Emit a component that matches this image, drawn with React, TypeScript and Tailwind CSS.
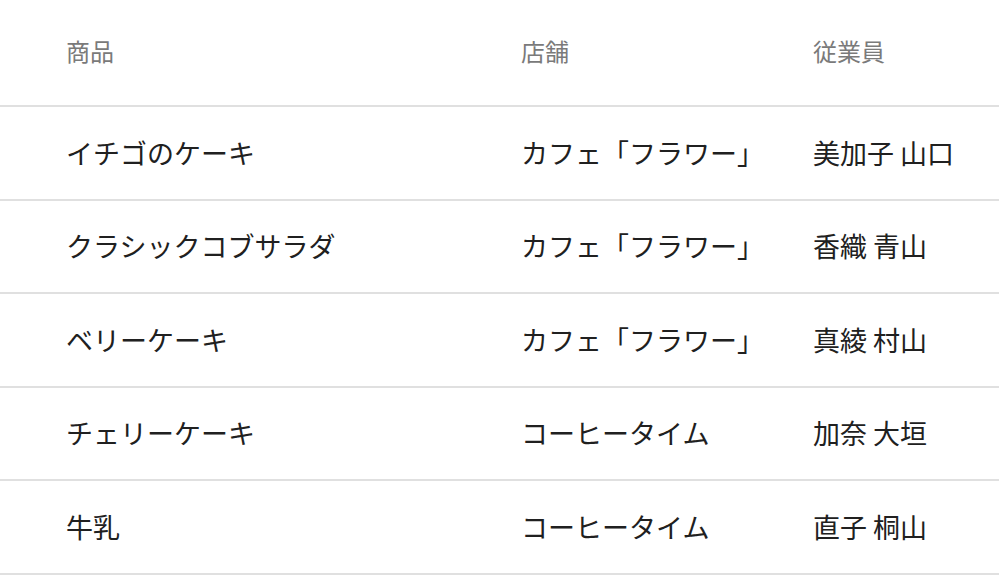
import React from 'react'

const rows = [
    { item: 'イチゴのケーキ', shop: 'カフェ「フラワー」', staff: '美加子 山口' },
    { item: 'クラシックコブサラダ', shop: 'カフェ「フラワー」', staff: '香織 青山' },
    { item: 'ベリーケーキ', shop: 'カフェ「フラワー」', staff: '真綾 村山' },
    { item: 'チェリーケーキ', shop: 'コーヒータイム', staff: '加奈 大垣' },
    { item: '牛乳', shop: 'コーヒータイム', staff: '直子 桐山' },
]

export default function App() {
    const font = { fontFamily: '"Noto Sans CJK JP", "Noto Sans", sans-serif' }
    const rowStyle = 'grid grid-cols-[521px_292px_1fr] items-center border-b-2 border-[#e0e0e0]'
    return (
        <div className="w-[999px] h-[576px] bg-white overflow-hidden" style={font}>
            <div className={rowStyle + ' h-[107px] pb-[4px] text-[24px] text-[#7a7a7a]'}>
                <div className="pl-[66px]">商品</div>
                <div>店舗</div>
                <div>従業員</div>
            </div>
            {rows.map((r) => (
                <div key={r.item} className={rowStyle + ' h-[93.5px] text-[27px] text-[#202020]'}>
                    <div className="pl-[66px]">{r.item}</div>
                    <div>{r.shop}</div>
                    <div className="whitespace-nowrap">{r.staff}</div>
                </div>
            ))}
        </div>
    )
}
